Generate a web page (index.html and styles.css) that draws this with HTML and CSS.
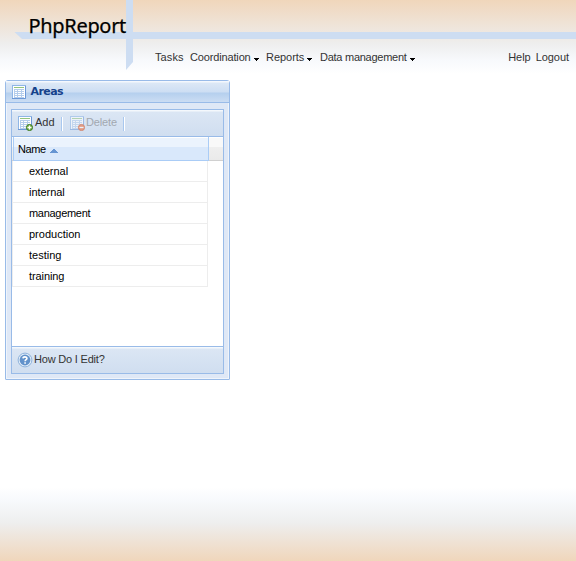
FILE: index.html
```html
<!DOCTYPE html>
<html lang="en">
<head>
<meta charset="utf-8">
<title>PhpReport</title>
<link rel="stylesheet" href="styles.css">
</head>
<body>
<svg class="defs" width="0" height="0">
  <defs>
    <symbol id="table" viewBox="0 0 16 16">
      <rect x="1.5" y="1.5" width="13" height="13" fill="#fff" stroke="#8fb6e6"/>
      <path d="M1 14.5h13.5V2" fill="none" stroke="#6c98d6"/>
      <path d="M3 3.5h10" stroke="#93c47f"/>
      <path d="M3 5h10v9H3z" fill="#b4cdec"/>
      <path d="M4 6h2v1H4zM7 6h3v1H7zM11 6h2v1h-2zM4 8h2v1H4zM7 8h3v1H7zM11 8h2v1h-2zM4 10h2v1H4zM7 10h3v1H7zM11 10h2v1h-2zM4 12h2v1H4zM7 12h3v1H7zM11 12h2v1h-2z" fill="#fff"/>
    </symbol>
  </defs>
</svg>
<div class="page">
  <header class="top">
    <svg class="cross" width="576" height="72">
      <path d="M14.5 32H576V39H22Z" fill="#cdddf2"/>
      <path d="M126 0H133V62L126 70Z" fill="#cdddf2"/>
    </svg>
    <h1 class="logo">PhpReport</h1>
    <nav class="menu">
      <a class="tasks">Tasks</a>
      <a class="drop coord">Coordination<svg width="5" height="3"><path d="M0 0H5V1H4V2H3V3H2V2H1V1H0Z"/></svg></a>
      <a class="drop reports">Reports<svg width="5" height="3"><path d="M0 0H5V1H4V2H3V3H2V2H1V1H0Z"/></svg></a>
      <a class="drop data">Data management<svg width="5" height="3"><path d="M0 0H5V1H4V2H3V3H2V2H1V1H0Z"/></svg></a>
      <span class="right"><a class="help">Help</a><a class="logout">Logout</a></span>
    </nav>
  </header>
  <section class="panel">
    <div class="title"><svg width="16" height="16"><use href="#table"/></svg><span>Areas</span></div>
    <div class="box">
      <div class="bar tools">
        <svg width="16" height="16" viewBox="0 0 16 16"><use href="#table"/><circle cx="12.5" cy="12.5" r="3.1" fill="#6fae45" stroke="#39761d" stroke-width=".9"/><path d="M10.5 12.5h4M12.5 10.5v4" stroke="#fff" stroke-width="1.3"/></svg>
        <span class="add">Add</span><i class="sep"></i>
        <svg class="off" width="16" height="16" viewBox="0 0 16 16"><use href="#table"/><circle cx="12.5" cy="12.5" r="3.1" fill="#f0642c" stroke="#cc4210" stroke-width=".9"/><path d="M10.5 12.5h4" stroke="#fff" stroke-width="1.3"/></svg>
        <span class="del">Delete</span><i class="sep"></i>
      </div>
      <div class="head"><div class="col"><span>Name</span><svg width="8" height="4"><path d="M3 0H5V1H6V2H7V3H8V4H0V3H1V2H2V1H3Z" fill="#6695d2"/></svg></div></div>
      <div class="rows">
        <div class="row external">external</div>
        <div class="row internal">internal</div>
        <div class="row management">management</div>
        <div class="row production">production</div>
        <div class="row testing">testing</div>
        <div class="row training">training</div>
      </div>
      <div class="bar foot">
        <svg width="16" height="16" viewBox="0 0 16 16"><circle cx="8" cy="8" r="6.9" fill="#e2edf9" stroke="#85abd8" stroke-width=".9"/><circle cx="8" cy="8" r="5.4" fill="#6292cb"/><path d="M6 6.4C6.1 4.3 9.9 4.3 9.9 6.4C9.9 7.7 8.1 7.6 8.1 9.3M8.1 10.2v1.5" fill="none" stroke="#fff" stroke-width="1.6"/></svg>
        <span class="how">How Do I Edit?</span>
      </div>
    </div>
  </section>
  <footer class="fade"></footer>
</div>
</body>
</html>
```
FILE: styles.css
```css
* { box-sizing: border-box; }
body { margin: 0; background: #fff; font: 11px/13px "Liberation Sans", Arial, sans-serif; color: #333; }
.defs { position: absolute; }
svg { display: block; flex: none; }
.page { height: 561px; display: flex; flex-direction: column; overflow: hidden; }
.top { position: relative; height: 80px; background: linear-gradient(#f0d6bb 0, #eee 44px, #f7f9fc 60px, #fff 74px); }
.cross { position: absolute; left: 0; top: 0; }
.logo { position: relative; margin: 0; padding: 13px 0 0 28.5px; height: 51px; font: 400 20px/26px "Noto Sans", "Open Sans", sans-serif; color: #000; white-space: nowrap; letter-spacing: -.32px; -webkit-text-stroke: .25px #000; }
.menu { position: relative; display: flex; padding-left: 155px; white-space: nowrap; }
.menu > a { flex: none; }
.tasks { width: 35px; letter-spacing: .1px; }
.coord { width: 76px; letter-spacing: -.15px; }
.reports { width: 54px; letter-spacing: -.03px; }
.data { letter-spacing: -.26px; }
.drop { display: flex; align-items: center; gap: 3px; }
.drop svg { margin-top: 3px; }
.right { display: flex; gap: 5px; margin-left: auto; padding-right: 7px; letter-spacing: -.05px; }

.panel { width: 225px; height: 300px; margin-left: 5px; border: 1px solid #99bbe8; border-radius: 3px 3px 1px 1px; background: #dfe8f6; display: flex; flex-direction: column; box-shadow: inset 0 0 0 1px #eff4fb; }
.title { height: 22px; flex: none; display: flex; align-items: center; gap: 4px; padding: 1px 0 0 5px; border-bottom: 1px solid #99bbe8; background: linear-gradient(#f4f8fd 0 1px, #dce8f6 2px, #cddef3 11px, #b5cfee 12px, #cbddf3 21px); color: #15428b; font: bold 11px/13px "DejaVu Sans", sans-serif; letter-spacing: -.55px; }
.title span { margin: -2px 0 0 -.5px; }
.box { margin: 6px 5px 5px; height: 266px; display: flex; flex-direction: column; border: 1px solid #99bbe8; background: #fff; }
.bar { flex: none; display: flex; align-items: center; padding-left: 5px; background: linear-gradient(#f4f8fc 0 1px, #dbe6f4 2px, #d0def0 100%); }
.tools { height: 27px; border-bottom: 1px solid #99bbe8; }
.add { width: 28px; padding-left: 2px; margin-top: -2px; }
.sep { width: 2px; height: 14px; border-left: 1px solid #a9c8ef; border-right: 1px solid #fff; margin-top: 2px; }
.off { opacity: .55; margin-left: 6px; }
.del { width: 38px; padding-left: 1px; margin-top: -2px; color: #a2a8b0; letter-spacing: -.15px; }
.head { height: 24px; flex: none; border-bottom: 1px solid #d0d0d0; background: linear-gradient(#fff 0 1px, #f9f9f9 1px 10px, #efefef 10px, #eaeaea); }
.col { width: 196px; height: 24px; margin-left: 1px; display: flex; align-items: center; gap: 4px; padding: 1px 0 0 4px; color: #000; border-left: 1px solid #aaccf6; border-right: 1px solid #aaccf6; border-bottom: 1px solid #aaccf6; background: linear-gradient(#fff 0 1px, #ebf3fd 1px 10px, #d9e8fb 10px); letter-spacing: -.4px; }
.col svg { margin-top: 4px; }
.rows { flex: 1; color: #000; }
.row { width: 196px; height: 21px; padding: 4px 0 0 16px; border: solid #ededed; border-width: 0 1px 1px; }
.internal { letter-spacing: -.05px; }
.management { letter-spacing: -.3px; }
.training { letter-spacing: -.1px; }
.foot { height: 28px; border-top: 1px solid #99bbe8; margin-bottom: -1px; border-bottom: 1px solid #99bbe8; }
.how { padding-left: 1px; margin-top: -2px; letter-spacing: -.2px; }
.fade { height: 74px; margin-top: auto; background: linear-gradient(#fff 0, #f7f9fc 14px, #eee 36px, #f0d6bb 100%); }
```
